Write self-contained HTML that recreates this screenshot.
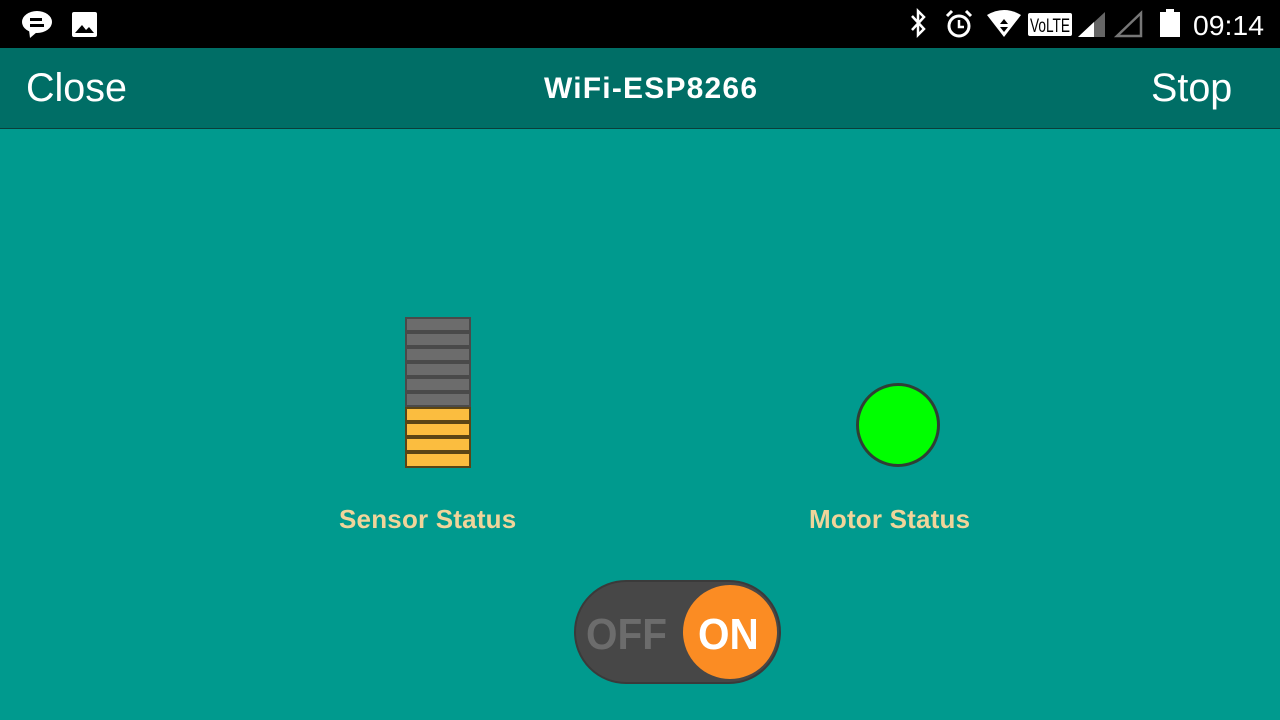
<!DOCTYPE html>
<html><head><meta charset="utf-8"><style>
*{margin:0;padding:0;box-sizing:border-box}
body{width:1280px;height:720px;overflow:hidden;background:#009a8e;font-family:"Liberation Sans",sans-serif;position:relative}
.sb{position:absolute;left:0;top:0;width:1280px;height:48px;background:#000;color:#fff}
.ab{position:absolute;left:0;top:48px;width:1280px;height:81px;background:#006e66;border-bottom:1px solid #0a3f3a}
.ab span{position:absolute;color:#fff;top:20px}
.seg{position:absolute;left:405px;width:66px;height:15px;border:2px solid #4a4a4a}
.lbl{position:absolute;top:504px;color:#f0d49a;font-weight:bold;font-size:26px;letter-spacing:0.2px}
</style></head><body>
<div class="sb">
<svg width="1280" height="48" style="position:absolute;left:0;top:0">
<ellipse cx="37" cy="22" rx="15" ry="11" fill="#fff"/><path d="M29 30 L30 38 L37 32Z" fill="#fff"/>
<rect x="30" y="18" width="12" height="3" fill="#000"/><rect x="30" y="24" width="14" height="3" fill="#000"/>
<rect x="72" y="12" width="25" height="25" rx="2" fill="#fff"/><path d="M75 33 L82 25 L86 30 L89 27 L94 33Z" fill="#000"/>
<path d="M912 16 L924 29 L918 35 L918 11 L924 17 L912 30" stroke="#fff" stroke-width="2.5" fill="none"/>
<circle cx="959" cy="26" r="10" stroke="#fff" stroke-width="3" fill="none"/><path d="M959 20 V27 H964" stroke="#fff" stroke-width="2.5" fill="none"/><path d="M947 16 L952 11 M971 16 L966 11" stroke="#fff" stroke-width="3"/>
<path d="M987 15 Q1004 5 1021 15 L1004 37Z" fill="#fff"/><path d="M1000 24 L1004 19 L1008 24Z M1000 27 H1008 L1004 32Z" fill="#000"/>
<rect x="1028" y="13" width="44" height="23" rx="2" fill="#fff"/>
<text x="1050" y="32" font-size="19" text-anchor="middle" font-family="Liberation Sans Narrow,Liberation Sans" fill="#000" textLength="40" lengthAdjust="spacingAndGlyphs">VoLTE</text>
<path d="M1078 37 L1105 12 V37Z" fill="#666"/><path d="M1078 37 L1094 22 V37Z" fill="#fff"/>
<path d="M1117 36 L1141 13 V36Z" stroke="#777" stroke-width="2.5" fill="none"/>
<rect x="1160" y="12" width="20" height="25" fill="#fff"/><rect x="1166" y="9" width="8" height="4" fill="#fff"/>
<text x="1193" y="35" font-size="28" fill="#fff" textLength="71" lengthAdjust="spacingAndGlyphs">09:14</text>
</svg></div>
<div class="ab"><span style="left:26px;font-size:39.5px;top:18px">Close</span>
<span style="left:544px;font-size:30px;font-weight:bold;top:24px;letter-spacing:1.2px">WiFi-ESP8266</span>
<span style="left:1151px;font-size:39.5px;top:18px">Stop</span></div>
<div class="seg" style="top:317px;background:#6c6c6c"></div>
<div class="seg" style="top:332px;background:#6c6c6c"></div>
<div class="seg" style="top:347px;background:#6c6c6c"></div>
<div class="seg" style="top:362px;background:#6c6c6c"></div>
<div class="seg" style="top:377px;background:#6c6c6c"></div>
<div class="seg" style="top:392px;background:#6c6c6c"></div>
<div class="seg" style="top:407px;background:#fbbd3f;border-color:#5a4515"></div>
<div class="seg" style="top:422px;background:#fbbd3f;border-color:#5a4515"></div>
<div class="seg" style="top:437px;background:#fbbd3f;border-color:#5a4515"></div>
<div class="seg" style="top:452px;background:#fbbd3f;border-color:#5a4515;height:16px"></div>
<div style="position:absolute;left:856px;top:383px;width:84px;height:84px;border-radius:50%;background:#00ff00;border:3px solid #2f3f34"></div>
<div class="lbl" style="left:339px">Sensor Status</div>
<div class="lbl" style="left:809px">Motor Status</div>
<div style="position:absolute;left:574px;top:580px;width:207px;height:104px;border-radius:52px;background:#474747;border:2px solid #3a3a3a"></div>
<div style="position:absolute;left:586px;top:610px;font-size:44px;font-weight:bold;color:#6c6c6c;transform:scaleX(0.92);transform-origin:left">OFF</div>
<div style="position:absolute;left:683px;top:585px;width:94px;height:94px;border-radius:50%;background:#fb8c23"></div>
<div style="position:absolute;left:698px;top:610px;font-size:44px;font-weight:bold;color:#fff;transform:scaleX(0.92);transform-origin:left">ON</div>
</body></html>
